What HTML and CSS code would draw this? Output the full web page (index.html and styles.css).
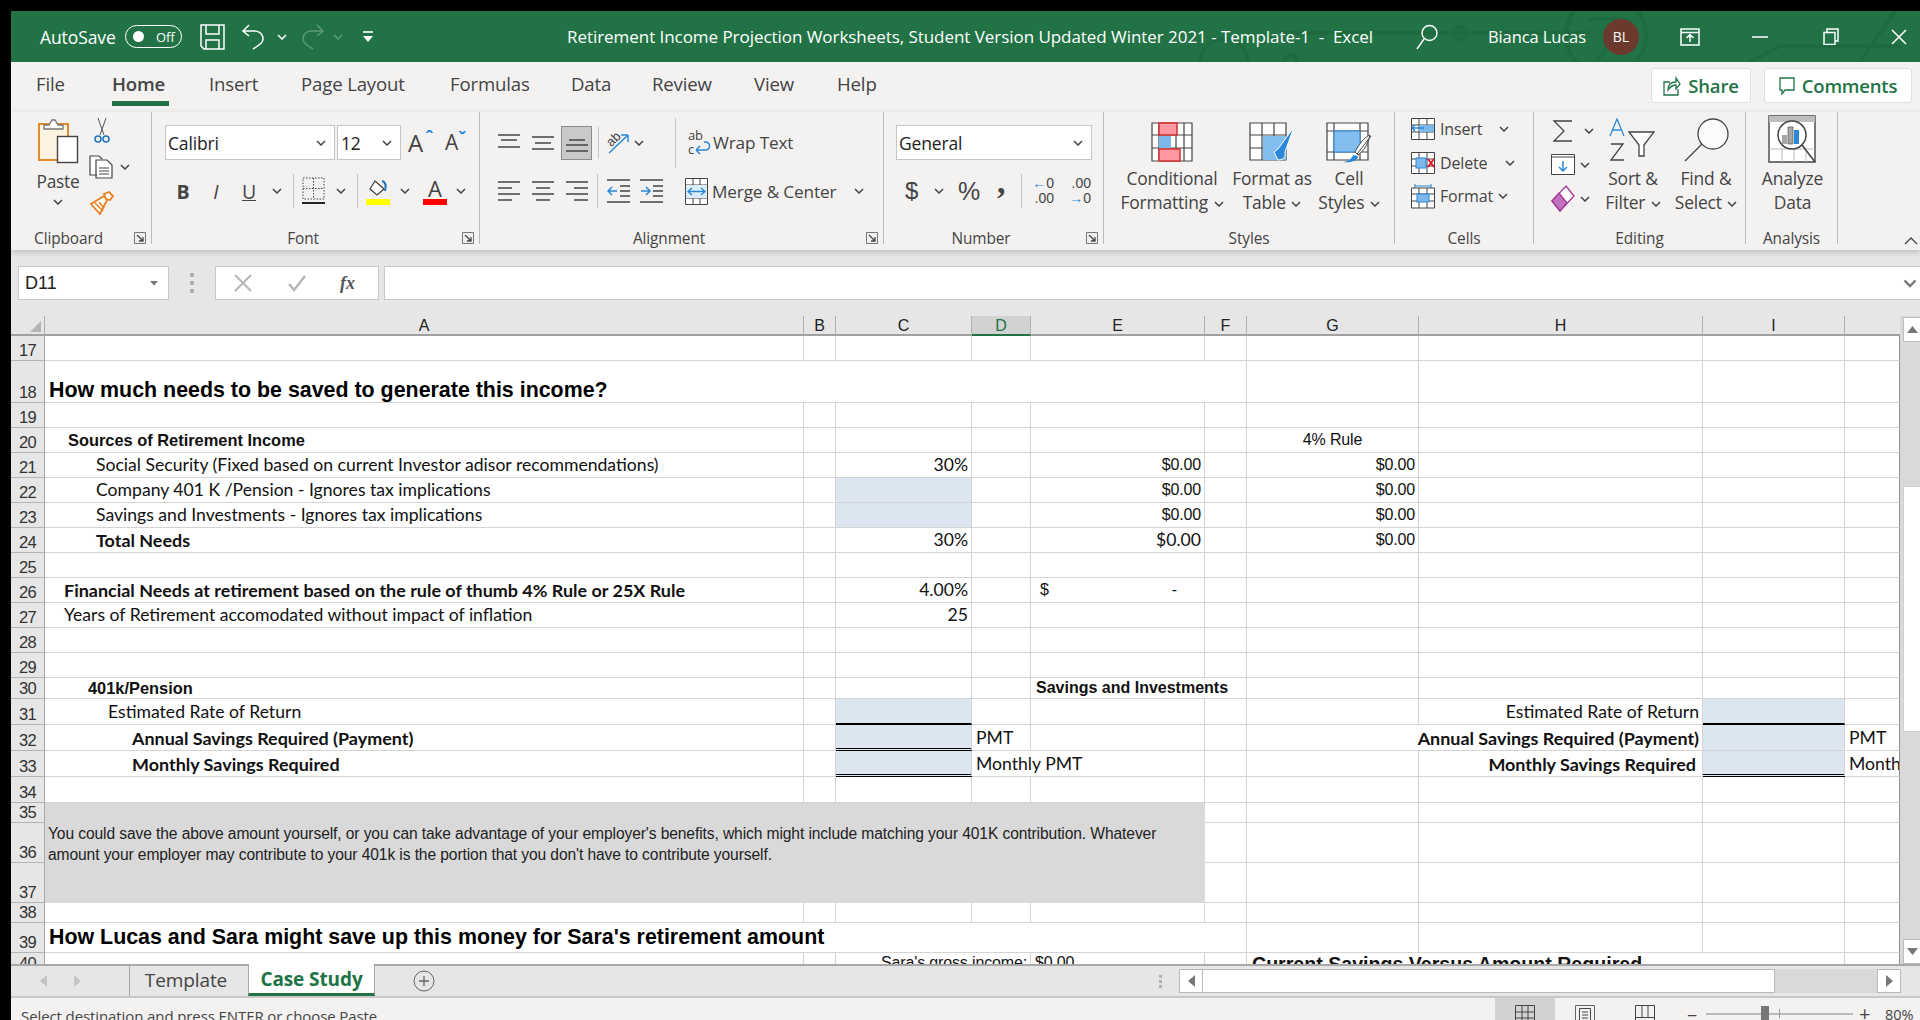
FILE: index.html
```html
<!DOCTYPE html>
<html lang="en">
<head>
<meta charset="utf-8">
<title>Retirement Income Projection Worksheets - Excel</title>
<link rel="stylesheet" href="styles.css">
</head>
<body>
<svg class="defs" width="0" height="0" aria-hidden="true">
  <symbol id="chev" viewBox="0 0 10 6"><path d="M1 1l4 4 4-4" fill="none" stroke="#444" stroke-width="1.5"/></symbol>
  <symbol id="launch" viewBox="0 0 12 12"><path d="M11.500 11.500H.5V.5h11z" fill="none" stroke="#777"/><path d="M3 3l6 6M9 5v4H5" fill="none" stroke="#444" stroke-width="1.3"/></symbol>
</svg>
<div class="app">
  <header class="titlebar">
    <svg class="circuit" width="760" height="51" viewBox="0 0 760 51" aria-hidden="true">
      <g fill="none" stroke="#1e6b40" stroke-width="4">
        <circle cx="64" cy="52" r="24"/>
        <path d="M52 54h32"/>
        <circle cx="131" cy="50" r="6"/>
        <path d="M120 22h310"/>
        <circle cx="300" cy="22" r="6"/>
        <circle cx="446" cy="24" r="40"/>
        <path d="M428 8h30l-4 18-18 25"/>
        <path d="M590 51l30-16h120M700 51l35-51"/>
      </g>
    </svg>
    <span class="autosave">AutoSave</span>
    <span class="toggle"><i class="knob"></i><b>Off</b></span>
    <svg class="qa-save" width="25" height="26" viewBox="0 0 25 26"><path d="M1 1h23v24H4l-3-3zM6 1v9h13V1M6 25v-9h13v9" fill="none" stroke="#fff" stroke-width="1.5"/></svg>
    <svg class="qa-undo" width="23" height="26" viewBox="0 0 23 26"><path d="M7 1L1 7l6 5M1 7h12a8 8 0 0 1 8 8c0 3-2 5-10 10" fill="none" stroke="#fff" stroke-width="1.5"/></svg>
    <svg class="qa-chev" width="10" height="6"><path d="M1 1l4 4 4-4" fill="none" stroke="#fff" stroke-width="1.5"/></svg>
    <svg class="qa-redo" width="23" height="26" viewBox="0 0 23 26"><path d="M16 1l6 6-6 5M22 7H10a8 8 0 0 0-8 8c0 3 2 5 10 10" fill="none" stroke="#5c9a78" stroke-width="1.5"/></svg>
    <svg class="qa-chev2" width="10" height="6"><path d="M1 1l4 4 4-4" fill="none" stroke="#5c9a78" stroke-width="1.5"/></svg>
    <svg class="qa-more" width="12" height="14" viewBox="0 0 12 14"><path d="M1 2h10" stroke="#fff" stroke-width="1.6"/><path d="M1 6h10l-5 6z" fill="#fff"/></svg>
    <span class="doc-title">Retirement Income Projection Worksheets, Student Version Updated Winter 2021 - Template-1 &nbsp;-&nbsp; Excel</span>
    <svg class="t-search" width="22" height="26" viewBox="0 0 22 26"><circle cx="13.5" cy="9" r="7.5" fill="none" stroke="#fff" stroke-width="1.4"/><path d="M8 15L1 25" stroke="#fff" stroke-width="1.4"/></svg>
    <span class="user">Bianca Lucas</span>
    <span class="avatar">BL</span>
    <svg class="t-display" width="20" height="18" viewBox="0 0 20 18"><path d="M1 1h18v16H1zM1 4.500h18M10 14V7M6.500 10L10 6.500l3.500 3.500" fill="none" stroke="#fff" stroke-width="1.5"/></svg>
    <svg class="t-min" width="16" height="2"><path d="M0 1h16" stroke="#fff" stroke-width="1.500"/></svg>
    <svg class="t-restore" width="16" height="17" viewBox="0 0 16 17"><path d="M1 4.500h11v12H1zM4 4.500V1h11v12h-3" fill="none" stroke="#fff" stroke-width="1.500"/></svg>
    <svg class="t-close" width="16" height="16" viewBox="0 0 16 16"><path d="M1 1l14 14M15 1L1 15" stroke="#fff" stroke-width="1.500"/></svg>
  </header>

  <nav class="tabs">
    <span class="tab t-file">File</span>
    <span class="tab tab-on t-home">Home</span>
    <span class="tab t-insert">Insert</span>
    <span class="tab t-layout">Page Layout</span>
    <span class="tab t-formulas">Formulas</span>
    <span class="tab t-data">Data</span>
    <span class="tab t-review">Review</span>
    <span class="tab t-view">View</span>
    <span class="tab t-help">Help</span>
    <button class="pill share"><svg width="18" height="20" viewBox="0 0 18 20"><path d="M7 6H1v13h14v-6M5 14c0-5 3-8 8-8V2l4 6-4 5V9c-4 0-6 2-8 5z" fill="none" stroke="#217346" stroke-width="1.300"/></svg>Share</button>
    <button class="pill comments"><svg width="16" height="18" viewBox="0 0 16 18"><path d="M1 1h14v12H6l-3 4v-4H1z" fill="none" stroke="#217346" stroke-width="1.300"/></svg>Comments</button>
  </nav>

  <section class="ribbon">
    <div class="group g-clip">
      <div class="clip-body">
        <div class="paste">
          <svg width="42" height="46" viewBox="0 0 42 46"><rect x="2" y="6" width="29" height="36" fill="#fdf3e3" stroke="#e58a2b" stroke-width="2"/><path d="M7 11V7h5l3-5h3l3 5h5v4z" fill="#fff" stroke="#777" stroke-width="1.300"/><rect x="20.500" y="18.500" width="20" height="26" fill="#fff" stroke="#444" stroke-width="1.400"/></svg>
          <span>Paste</span>
          <svg class="chev" width="10" height="6"><use href="#chev"/></svg>
        </div>
        <div class="clip-tools">
          <svg width="16" height="25" viewBox="0 0 16 25"><path d="M4 0l6 17M12 0L6 17" stroke="#555" fill="none"/><circle cx="4" cy="21" r="3" fill="none" stroke="#1b75bb" stroke-width="1.500"/><circle cx="12" cy="21" r="3" fill="none" stroke="#1b75bb" stroke-width="1.500"/></svg>
          <span class="copy"><svg width="25" height="24" viewBox="0 0 25 24"><path d="M8 20H1V1h9l3 3M7 5h11l5 5v13H7z" fill="#fff" stroke="#444" stroke-width="1.200"/><path d="M10 13h10M10 16h10M10 19h10" stroke="#444"/></svg><svg class="chev" width="10" height="6"><use href="#chev"/></svg></span>
          <svg width="25" height="24" viewBox="0 0 25 24"><path d="M15 3l5-2 4 4-3 4-4-1zM15 5L2 13l9 10 7-14z" fill="#fff" stroke="#e5801c" stroke-width="1.800"/><path d="M6 12l8 8M10 11l5 6" stroke="#e5801c" stroke-width="1.500"/></svg>
        </div>
      </div>
      <div class="glabel"><span>Clipboard</span><svg class="launch" width="12" height="12"><use href="#launch"/></svg></div>
    </div>

    <div class="group g-font">
      <div class="grow r1">
        <span class="select s-font">Calibri<svg width="10" height="6"><use href="#chev"/></svg></span>
        <span class="select s-size">12<svg width="10" height="6"><use href="#chev"/></svg></span>
        <span class="grow-a">A<sup>ˆ</sup></span>
        <span class="shrink-a">A<sup>ˇ</sup></span>
      </div>
      <div class="grow r2 font-tools">
        <b class="ft-b">B</b>
        <i class="ft-i">I</i>
        <u class="ft-u">U</u>
        <svg class="chev c1" width="10" height="6"><use href="#chev"/></svg>
        <span class="vsep s1"></span>
        <svg class="ft-border" width="23" height="28" viewBox="0 0 23 28"><path d="M1 1h21v21H1zM11.500 1v21M1 11.500h21" fill="none" stroke="#444" stroke-dasharray="1.500 1.500"/><path d="M0 26h23" stroke="#222" stroke-width="2"/></svg>
        <svg class="chev c2" width="10" height="6"><use href="#chev"/></svg>
        <span class="vsep s2"></span>
        <svg class="ft-fill" width="24" height="28" viewBox="0 0 24 28"><path d="M9 4l-5 8 7 6 7-6z" fill="#fff" stroke="#444" stroke-width="1.300"/><path d="M16 4c4 1 4 6 3 10" fill="none" stroke="#1b75bb" stroke-width="2"/><rect y="22" width="24" height="6" fill="#ffff00"/></svg>
        <svg class="chev c3" width="10" height="6"><use href="#chev"/></svg>
        <span class="ft-color">A</span>
        <svg class="chev c4" width="10" height="6"><use href="#chev"/></svg>
      </div>
      <div class="glabel"><span>Font</span><svg class="launch" width="12" height="12"><use href="#launch"/></svg></div>
    </div>

    <div class="group g-align">
      <div class="grow r1 al-r1">
        <svg class="al a1" width="22" height="18" viewBox="0 0 22 18"><path d="M0 1h22M3 6h16M0 13h22" stroke="#444" stroke-width="1.300"/></svg>
        <svg class="al a2" width="22" height="18" viewBox="0 0 22 18"><path d="M0 3h22M3 9h16M0 15h22" stroke="#444" stroke-width="1.300"/></svg>
        <span class="al-on"><svg width="22" height="18" viewBox="0 0 22 18"><path d="M3 6h16M0 11h22M0 17h22" stroke="#444" stroke-width="1.300"/></svg></span>
        <span class="vsep s3"></span>
        <svg class="al-orient" width="24" height="24" viewBox="0 0 24 24"><path d="M3 22L22 4M22 4h-7M22 4v7" fill="none" stroke="#2b88d8" stroke-width="1.500"/><text x="1" y="14" class="ab-rot" transform="rotate(-45 6 10)">ab</text></svg>
        <svg class="chev c5" width="10" height="6"><use href="#chev"/></svg>
        <span class="vsep s4"></span>
        <span class="ic-txt wrap"><svg width="24" height="26" viewBox="0 0 24 26"><text x="0" y="10" class="wraptxt">ab</text><text x="0" y="24" class="wraptxt">c</text><path d="M8 20h9c6 0 6-8 0-8h-1M8 20l4-4M8 20l4 4" fill="none" stroke="#2b88d8" stroke-width="1.500"/></svg>Wrap Text</span>
      </div>
      <div class="grow r2 al-r2">
        <svg class="al a1" width="22" height="22" viewBox="0 0 22 22"><path d="M0 2h22M0 8h14M0 14h22M0 20h14" stroke="#444" stroke-width="1.300"/></svg>
        <svg class="al a2" width="22" height="22" viewBox="0 0 22 22"><path d="M0 2h22M4 8h14M0 14h22M4 20h14" stroke="#444" stroke-width="1.300"/></svg>
        <svg class="al a3" width="22" height="22" viewBox="0 0 22 22"><path d="M0 2h22M8 8h14M0 14h22M8 20h14" stroke="#444" stroke-width="1.300"/></svg>
        <span class="vsep s5"></span>
        <svg class="al-ind" width="23" height="24" viewBox="0 0 23 24"><path d="M0 1h23M13 7h10M13 12h10M13 17h10M0 23h23" stroke="#444" stroke-width="1.300"/><path d="M10 12H1M5 8l-4 4 4 4" fill="none" stroke="#2b88d8" stroke-width="1.500"/></svg>
        <svg class="al-out" width="23" height="24" viewBox="0 0 23 24"><path d="M0 1h23M13 7h10M13 12h10M13 17h10M0 23h23" stroke="#444" stroke-width="1.300"/><path d="M1 12h9M6 8l4 4-4 4" fill="none" stroke="#2b88d8" stroke-width="1.500"/></svg>
        <span class="ic-txt merge"><svg width="23" height="27" viewBox="0 0 23 27"><path d="M.5.500h22v26H.5zM.5 7h22M.5 20h22M8 .500V7M15 .500V7M8 20v7M15 20v7" fill="#fff" stroke="#444"/><rect x="1" y="7" width="21" height="13" fill="#dcecf9"/><path d="M3 13.500h17M7 10l-4 3.500L7 17M16 10l4 3.500-4 3.500" fill="none" stroke="#2b88d8" stroke-width="1.400"/></svg>Merge &amp; Center<svg class="chev c6" width="10" height="6"><use href="#chev"/></svg></span>
      </div>
      <div class="glabel"><span>Alignment</span><svg class="launch" width="12" height="12"><use href="#launch"/></svg></div>
    </div>

    <div class="group g-num">
      <div class="grow r1"><span class="select s-num">General<svg width="10" height="6"><use href="#chev"/></svg></span></div>
      <div class="grow r2 num-tools">
        <span class="n-dollar">$</span>
        <svg class="chev c7" width="10" height="6"><use href="#chev"/></svg>
        <span class="n-pct">%</span>
        <span class="n-comma">,</span>
        <span class="vsep s6"></span>
        <span class="decs d1"><em>←</em>0<br>.00</span>
        <span class="decs d2">.00<br><em>→</em>0</span>
      </div>
      <div class="glabel"><span>Number</span><svg class="launch" width="12" height="12"><use href="#launch"/></svg></div>
    </div>

    <div class="group g-styles">
      <div class="big-row styles-row">
        <div class="big b-cond">
          <svg width="42" height="40" viewBox="0 0 42 40"><path d="M1 1h40v38H1zM8 1v38M33 1v38M25 1v38M1 13h40M1 26h40" fill="#fff" stroke="#444" stroke-width="1.200"/><rect x="8" y="1" width="18" height="12" fill="#ff98a1" stroke="#d62f2f" stroke-width="1.500"/><rect x="8" y="14" width="12" height="12" fill="#7db7ec"/><rect x="8" y="27" width="21" height="12" fill="#ff98a1" stroke="#d62f2f" stroke-width="1.500"/></svg>
          <span>Conditional<br>Formatting <svg width="10" height="6"><use href="#chev"/></svg></span>
        </div>
        <div class="big b-table">
          <svg width="46" height="42" viewBox="0 0 46 42"><path d="M1 1h36v37H1zM13 1v37M25 1v37M1 13h36M1 26h36" fill="#fff" stroke="#444" stroke-width="1.200"/><rect x="14" y="14" width="23" height="24" fill="#83bdf0"/><path d="M45 5L29 27l-4 3 4 8c6 0 8-4 7-8z" fill="#2b88d8" stroke="#fff"/></svg>
          <span>Format as<br>Table <svg width="10" height="6"><use href="#chev"/></svg></span>
        </div>
        <div class="big b-cell">
          <svg width="46" height="42" viewBox="0 0 46 42"><path d="M1 1h41v37H1zM8 1v37M34 1v37M1 9h41M1 30h41" fill="#fff" stroke="#444" stroke-width="1.200"/><rect x="8" y="9" width="26" height="21" fill="#83bdf0" stroke="#2b88d8"/><path d="M45 14L31 32M44 13c-6 2-12 11-15 17l3 3c6-4 10-11 12-20z" fill="#fff" stroke="#444"/><path d="M27 33c-1 4-6 7-10 7 8 1 15-1 15-6z" fill="#2b88d8"/></svg>
          <span>Cell<br>Styles <svg width="10" height="6"><use href="#chev"/></svg></span>
        </div>
      </div>
      <div class="glabel"><span>Styles</span></div>
    </div>

    <div class="group g-cells">
      <div class="cell-tools">
        <span class="ic-txt"><svg width="24" height="22" viewBox="0 0 24 22"><path d="M.5.500h23v21H.5zM8 .500v21M16 .500v21M.5 7h23M.5 14h23" fill="#fff" stroke="#444"/><rect x="8" y="7" width="15" height="7" fill="#7db7ec"/><path d="M1 10h12M4 7l-3 3 3 3" fill="none" stroke="#2b88d8" stroke-width="1.500"/></svg>Insert<svg class="chev c8" width="10" height="6"><use href="#chev"/></svg></span>
        <span class="ic-txt"><svg width="24" height="22" viewBox="0 0 24 22"><path d="M.5.500h23v21H.5zM8 .500v21M16 .500v21M.5 7h23M.5 14h23" fill="#fff" stroke="#444"/><rect x="5" y="6" width="10" height="10" fill="#7db7ec" stroke="#2b88d8"/><path d="M17 7l6 8M23 7l-6 8" stroke="#e81123" stroke-width="1.800"/></svg>Delete<svg class="chev c9" width="10" height="6"><use href="#chev"/></svg></span>
        <span class="ic-txt"><svg width="24" height="26" viewBox="0 0 24 26"><path d="M4 1v5M20 1v5M4 3h16" stroke="#2b88d8" fill="none"/><path d="M.5 5h23v20H.5zM8 5v20M16 5v20M.5 11h23M.5 18h23" fill="#fff" stroke="#444"/><rect x="6" y="11" width="12" height="8" fill="#7db7ec" stroke="#2b88d8"/></svg>Format<svg class="chev c10" width="10" height="6"><use href="#chev"/></svg></span>
      </div>
      <div class="glabel"><span>Cells</span></div>
    </div>

    <div class="group g-edit">
      <div class="big-row edit-row">
        <div class="edit-tools">
          <span class="et et-sum"><svg class="sigma" width="24" height="22" viewBox="0 0 24 22"><path d="M21 1H3l10 10L3 21h18" fill="none" stroke="#444" stroke-width="1.300"/></svg><svg class="chev" width="10" height="6"><use href="#chev"/></svg></span>
          <span class="et"><svg width="24" height="21" viewBox="0 0 24 21"><path d="M.5.500h23v20H.5z" fill="#fff" stroke="#444"/><path d="M.5 3h23" stroke="#444"/><path d="M12 7v10M8 13l4 4 4-4" fill="none" stroke="#2b88d8" stroke-width="1.500"/></svg><svg class="chev" width="10" height="6"><use href="#chev"/></svg></span>
          <span class="et"><svg width="24" height="28" viewBox="0 0 24 28"><path d="M15 1l8 10-14 15-8-10z" fill="#fff" stroke="#a4379c" stroke-width="1.300"/><path d="M1 16l8 10 7-8-8-10z" fill="#c272bd" stroke="#a4379c" stroke-width="1.300"/></svg><svg class="chev" width="10" height="6"><use href="#chev"/></svg></span>
        </div>
        <div class="big b-sort">
          <svg width="48" height="44" viewBox="0 0 48 44"><path d="M1 18L8 1l7 17M3.500 12h9" fill="none" stroke="#2b88d8" stroke-width="1.300"/><path d="M2 26h12L2 42h13" fill="none" stroke="#444" stroke-width="1.300"/><path d="M20 14h25L35 27v11h-5V27z" fill="#fff" stroke="#444" stroke-width="1.300"/></svg>
          <span>Sort &amp;<br>Filter <svg width="10" height="6"><use href="#chev"/></svg></span>
        </div>
        <div class="big b-find">
          <svg width="46" height="44" viewBox="0 0 46 44"><circle cx="30" cy="16" r="15" fill="#fbfbfb" stroke="#444" stroke-width="1.300"/><path d="M19 26L2 43" stroke="#444" stroke-width="1.300"/></svg>
          <span>Find &amp;<br>Select <svg width="10" height="6"><use href="#chev"/></svg></span>
        </div>
      </div>
      <div class="glabel"><span>Editing</span></div>
    </div>

    <div class="group g-analysis">
      <div class="big-row">
        <div class="big b-analyze">
          <svg width="48" height="48" viewBox="0 0 48 48"><path d="M1 1h46v46H1z" fill="#fff" stroke="#444" stroke-width="1.400"/><path d="M1 1h46v6H1z" fill="#bdbdbd"/><path d="M1 34h46M14 34v13M26 34v13M38 34v13" stroke="#bbb"/><circle cx="24" cy="20" r="14" fill="#fff" stroke="#444" stroke-width="1.500"/><rect x="14" y="20" width="5" height="9" fill="#a6a6a6"/><rect x="20" y="12" width="5" height="17" fill="#a6a6a6" stroke="#444" stroke-width=".6"/><rect x="26" y="15" width="5" height="14" fill="#2b88d8"/><path d="M34 30l13 17" stroke="#444" stroke-width="1.600"/></svg>
          <span>Analyze<br>Data</span>
        </div>
      </div>
      <div class="glabel"><span>Analysis</span></div>
    </div>
    <svg class="collapse" width="14" height="9" viewBox="0 0 14 9"><path d="M1 8l6-6 6 6" fill="none" stroke="#444" stroke-width="1.300"/></svg>
  </section>

  <section class="formula">
    <div class="namebox"><span>D11</span><svg width="8" height="5"><path d="M0 0h8L4 4.500z" fill="#777"/></svg></div>
    <span class="dots"><i></i><i></i><i></i></span>
    <div class="fxbox">
      <svg width="18" height="18" viewBox="0 0 18 18"><path d="M1 1l16 16M17 1L1 17" stroke="#b5b5b5" stroke-width="2"/></svg>
      <svg width="18" height="18" viewBox="0 0 18 18"><path d="M1 10l5 6L17 2" fill="none" stroke="#b5b5b5" stroke-width="2.400"/></svg>
      <span>fx</span>
    </div>
    <div class="fxinput"><svg width="14" height="9" viewBox="0 0 14 9"><path d="M1.500 1.500L7 7l5.500-5.500" fill="none" stroke="#777" stroke-width="2.400"/></svg></div>
  </section>

  <section class="sheet">
    <div class="gridwrap">
      <table class="grid">
        <colgroup><col class="c-rh"><col class="c-a"><col class="c-b"><col class="c-c"><col class="c-d"><col class="c-e"><col class="c-f"><col class="c-g"><col class="c-h"><col class="c-i"><col class="c-j"></colgroup>
        <thead>
          <tr class="rhead"><th class="corner"><i></i></th><th>A</th><th>B</th><th>C</th><th class="col-on">D</th><th>E</th><th>F</th><th>G</th><th>H</th><th>I</th><th></th></tr>
        </thead>
        <tbody>
          <tr class="h25"><th>17</th><td></td><td></td><td></td><td></td><td></td><td></td><td></td><td></td><td></td><td></td></tr>
          <tr class="h42"><th>18</th><td colspan="6" class="head head-a">How much needs to be saved to generate this income?</td><td></td><td></td><td></td><td></td></tr>
          <tr class="h25"><th>19</th><td></td><td></td><td></td><td></td><td></td><td></td><td></td><td></td><td></td><td></td></tr>
          <tr class="h25"><th>20</th><td class="ari-cal bold ind1">Sources of Retirement Income</td><td></td><td></td><td></td><td></td><td></td><td class="ari mid">4% Rule</td><td></td><td></td><td></td></tr>
          <tr class="h25"><th>21</th><td class="cal ind2">Social Security (Fixed based on current Investor adisor recommendations)</td><td></td><td class="cal num">30%</td><td></td><td class="ari num">$0.00</td><td></td><td class="ari num">$0.00</td><td></td><td></td><td></td></tr>
          <tr class="h25"><th>22</th><td class="cal ind2">Company 401 K /Pension - Ignores tax implications</td><td></td><td class="fill"></td><td></td><td class="ari num">$0.00</td><td></td><td class="ari num">$0.00</td><td></td><td></td><td></td></tr>
          <tr class="h25"><th>23</th><td class="cal ind2">Savings and Investments - Ignores tax implications</td><td></td><td class="fill"></td><td></td><td class="ari num">$0.00</td><td></td><td class="ari num">$0.00</td><td></td><td></td><td></td></tr>
          <tr class="h25"><th>24</th><td class="cal bold ind2">Total Needs</td><td></td><td class="cal num">30%</td><td></td><td class="cal num">$0.00</td><td></td><td class="ari num">$0.00</td><td></td><td></td><td></td></tr>
          <tr class="h25"><th>25</th><td></td><td></td><td></td><td></td><td></td><td></td><td></td><td></td><td></td><td></td></tr>
          <tr class="h25"><th>26</th><td class="cal bold ind0">Financial Needs at retirement based on the rule of thumb 4% Rule or 25X Rule</td><td></td><td class="cal num">4.00%</td><td></td><td class="ari"><div class="acct"><span>$</span><span>-</span></div></td><td></td><td></td><td></td><td></td><td></td></tr>
          <tr class="h25"><th>27</th><td class="cal ind0">Years of Retirement accomodated without impact of inflation</td><td></td><td class="cal num">25</td><td></td><td></td><td></td><td></td><td></td><td></td><td></td></tr>
          <tr class="h25"><th>28</th><td></td><td></td><td></td><td></td><td></td><td></td><td></td><td></td><td></td><td></td></tr>
          <tr class="h25"><th>29</th><td></td><td></td><td></td><td></td><td></td><td></td><td></td><td></td><td></td><td></td></tr>
          <tr class="h21"><th>30</th><td class="ari-cal bold ind3">401k/Pension</td><td></td><td></td><td></td><td colspan="2" class="ari bold small-left">Savings and Investments</td><td></td><td></td><td></td><td></td></tr>
          <tr class="h26"><th>31</th><td class="cal ind4">Estimated Rate of Return</td><td></td><td class="fill b-thick"></td><td></td><td></td><td></td><td></td><td class="cal num">Estimated Rate of Return</td><td class="fill b-thick"></td><td></td></tr>
          <tr class="h26"><th>32</th><td class="cal bold ind5">Annual Savings Required (Payment)</td><td></td><td class="fill b-dbl"></td><td class="cal pad">PMT</td><td></td><td></td><td colspan="2" class="cal bold num">Annual Savings Required (Payment)</td><td class="fill"></td><td class="cal pad">PMT</td></tr>
          <tr class="h26"><th>33</th><td class="cal bold ind5">Monthly Savings Required</td><td></td><td class="fill b-dbl"></td><td colspan="2" class="cal pad">Monthly PMT</td><td></td><td></td><td class="cal bold num num-8">Monthly Savings Required</td><td class="fill b-dbl"></td><td class="cal pad clip">Monthly PMT</td></tr>
          <tr class="h26"><th>34</th><td></td><td></td><td></td><td></td><td></td><td></td><td></td><td></td><td></td><td></td></tr>
          <tr class="h20"><th>35</th><td colspan="5" rowspan="3" class="note">You could save the above amount yourself, or you can take advantage of your employer's benefits, which might include matching your 401K contribution. Whatever<br>amount your employer may contribute to your 401k is the portion that you don't have to contribute yourself.</td><td></td><td></td><td></td><td></td><td></td></tr>
          <tr class="h40"><th>36</th><td></td><td></td><td></td><td></td><td></td></tr>
          <tr class="h40"><th>37</th><td></td><td></td><td></td><td></td><td></td></tr>
          <tr class="h20"><th>38</th><td></td><td></td><td></td><td></td><td></td><td></td><td></td><td></td><td></td><td></td></tr>
          <tr class="h30"><th>39</th><td colspan="6" class="head head-b">How Lucas and Sara might save up this money for Sara's retirement amount</td><td></td><td></td><td></td><td></td></tr>
          <tr class="h26 cutoff"><th>40</th><td></td><td></td><td colspan="2" class="ari num top">Sara's gross income:</td><td class="ari pad top">$0.00</td><td></td><td colspan="3" class="ari bold sub top">Current Savings Versus Amount Required</td><td></td></tr>
        </tbody>
      </table>
    </div>
    <div class="vscroll">
      <span class="sb-btn"><svg width="11" height="7"><path d="M0 7L5.500 0 11 7z" fill="#777"/></svg></span>
      <span class="sb-gap1"></span>
      <span class="sb-thumb"></span>
      <span class="sb-gap2"></span>
      <span class="sb-btn"><svg width="11" height="7"><path d="M0 0l5.500 7L11 0z" fill="#777"/></svg></span>
    </div>
  </section>

  <section class="sheettabs">
    <svg class="nav n1" width="7" height="12"><path d="M7 0v12L0 6z" fill="#c4c4c4"/></svg>
    <svg class="nav n2" width="7" height="12"><path d="M0 0v12l7-6z" fill="#c4c4c4"/></svg>
    <span class="st-sep"></span>
    <span class="st st-template">Template</span>
    <span class="st st-on">Case Study</span>
    <svg class="st-add" width="22" height="22" viewBox="0 0 22 22"><circle cx="11" cy="11" r="10" fill="none" stroke="#666"/><path d="M11 6v10M6 11h10" stroke="#666" stroke-width="1.300"/></svg>
    <span class="dots st-dots"><i></i><i></i><i></i></span>
    <span class="hs-btn hs-left"><svg width="7" height="12"><path d="M7 0v12L0 6z" fill="#777"/></svg></span>
    <span class="hs-thumb"></span>
    <span class="hs-track"></span>
    <span class="hs-btn hs-right"><svg width="7" height="12"><path d="M0 0v12l7-6z" fill="#777"/></svg></span>
  </section>

  <footer class="status">
    <span class="st-msg">Select destination and press ENTER or choose Paste</span>
    <span class="view view-on"><svg width="20" height="20" viewBox="0 0 20 20"><path d="M.5.500h19v19H.5zM7 .500v19M13 .500v19M.5 7h19M.5 13h19" fill="none" stroke="#444"/></svg></span>
    <span class="view"><svg width="20" height="20" viewBox="0 0 20 20"><path d="M.5.500h19v19H.5z" fill="none" stroke="#666"/><path d="M4.500 3.500h11v16h-11zM7 7h6M7 10h6M7 13h6M7 16h6" fill="none" stroke="#444"/></svg></span>
    <span class="view"><svg width="20" height="20" viewBox="0 0 20 20"><path d="M.5.500h19v19H.5zM7 .500v12M13 .500v12M.5 12.500h19" fill="none" stroke="#444"/></svg></span>
    <span class="z-minus">−</span>
    <span class="slider"><i class="tick"></i><i class="thumb"></i></span>
    <span class="z-plus">+</span>
    <span class="z-pct">80%</span>
  </footer>
</div>
</body>
</html>
```
FILE: styles.css
```css
* { box-sizing: border-box; }
html, body { margin: 0; height: 100%; overflow: hidden; background: #000; }
body { padding: 11px 0 0 11px; font-family: "Open Sans", "Noto Sans", sans-serif; color: #444; }
.defs { position: absolute; }
svg { display: block; flex: none; }
button { font: inherit; }

.app { width: 1909px; height: 1009px; display: flex; flex-direction: column; background: #f3f2f1; overflow: hidden; }

/* Title bar */
.titlebar { position: relative; flex: none; height: 51px; background: #217346; display: flex; align-items: center; color: #fff; padding-left: 29px; font-size: 16px; }
.circuit { position: absolute; right: 0; top: 0; }
.titlebar > *:not(.circuit) { position: relative; }
.autosave { width: 85px; letter-spacing: -.1px; font-size: 17.5px; }
.toggle { width: 57px; height: 23px; border: 1px solid #fff; border-radius: 12px; display: flex; align-items: center; padding-left: 7px; gap: 12px; font-size: 13px; }
.toggle b { font-weight: 400; }
.knob { width: 11px; height: 11px; border-radius: 50%; background: #fff; }
.qa-save { margin-left: 18px; }
.qa-undo { margin-left: 17px; }
.qa-chev { margin-left: 12px; }
.qa-redo { margin-left: 14px; }
.qa-chev2 { margin-left: 9px; }
.qa-more { margin-left: 19px; }
.doc-title { margin-left: 193px; width: 773px; white-space: nowrap; font-size: 17px; letter-spacing: -.05px; }
.t-search { margin-left: 76px; }
.user { margin-left: 50px; width: 102px; white-space: nowrap; font-size: 16.5px; letter-spacing: -.1px; }
.avatar { margin-left: 13px; width: 36px; height: 36px; border-radius: 50%; background: #6b3a2c; display: flex; align-items: center; justify-content: center; font-size: 14px; }
.t-display { margin-left: 41px; }
.t-min { margin-left: 52px; }
.t-restore { margin-left: 55px; }
.t-close { margin-left: 52px; }

/* Tabs */
.tabs { flex: none; height: 50px; display: flex; align-items: center; padding-left: 25px; font-size: 18.6px; position: relative; }
.tab { display: block; white-space: nowrap; line-height: 36px; height: 37px; margin-top: -6px; letter-spacing: -.15px; }
.t-file { width: 76px; }
.t-home { width: 97px; }
.t-insert { width: 92px; }
.t-layout { width: 149px; }
.t-formulas { width: 121px; }
.t-data { width: 81px; }
.t-review { width: 102px; }
.t-view { width: 83px; }
.t-help { width: 814px; }
.tab-on { font-weight: 600; }
.t-home::after { content: ""; display: block; width: 57px; height: 5px; background: #217346; margin-top: -1px; }
.pill { height: 35px; background: #fff; border: 1px solid #e1dfdd; border-radius: 3px; display: flex; align-items: center; justify-content: center; gap: 7px; color: #217346; font-weight: 600; font-size: 18.5px; letter-spacing: -.2px; margin-top: -3px; padding: 0; }
.share { width: 100px; }
.comments { width: 148px; margin-left: 13px; }

/* Ribbon */
.ribbon { flex: none; height: 138px; display: flex; position: relative; font-size: 17.4px; box-shadow: 0 2px 6px rgba(0,0,0,.18); z-index: 1; }
.group { height: 132px; border-right: 1px solid #bdbbb9; display: flex; flex-direction: column; flex: none; }
.g-clip { width: 141px; }
.g-font { width: 328px; }
.g-align { width: 404px; }
.g-num { width: 220px; }
.g-styles { width: 291px; }
.g-cells { width: 139px; }
.g-edit { width: 212px; }
.g-analysis { width: 92px; }
.glabel { margin-top: auto; height: 20px; margin-bottom: -4px; display: flex; align-items: center; font-size: 15.4px; letter-spacing: -.1px; }
.glabel span { flex: 1; text-align: center; }
.launch { margin: 0 5px 0 8px; }

.clip-body { display: flex; padding: 6px 0 0 26px; }
.paste { width: 42px; display: flex; flex-direction: column; align-items: center; }
.paste span { margin-top: 5px; line-height: 24px; letter-spacing: -.3px; }
.paste .chev { margin-top: 6px; }
.clip-tools { margin-left: 10px; display: flex; flex-direction: column; gap: 12px; }
.clip-tools > svg:first-child { margin-left: 5px; }
.clip-tools .copy { display: flex; align-items: center; gap: 6px; width: 45px; }

.grow { display: flex; align-items: center; }
.r1 { height: 35px; margin-top: 13px; }
.r2 { height: 34px; margin-top: 14px; }
.g-font .grow { padding-left: 13px; }
.select { height: 35px; background: #fff; border: 1px solid #c8c6c4; display: flex; align-items: center; justify-content: space-between; padding: 0 8px 0 2px; color: #222; font-size: 17.5px; letter-spacing: -.15px; }
.s-font { width: 170px; }
.s-size { width: 64px; margin-left: 2px; padding-left: 3px; }
.s-num { width: 196px; margin-left: 12px; }
.grow-a, .shrink-a { font-size: 24px; line-height: 1; position: relative; color: #444; }
.grow-a { margin-left: 7px; width: 37px; }
.shrink-a { width: 26px; font-size: 21px; }
.grow-a sup, .shrink-a sup { position: absolute; left: 17px; top: -2px; font-size: 17px; line-height: 1; color: #2b88d8; font-weight: 700; }
.shrink-a sup { left: 13px; }
.font-tools b, .font-tools i, .font-tools u { font-size: 19.5px; text-align: center; color: #444; font-family: "Open Sans", sans-serif; font-weight: 400; }
.font-tools b { font-weight: 700; }
.ft-b { margin-left: 9px; width: 18px; }
.ft-i { margin-left: 16px; width: 16px; }
.ft-u { margin-left: 17px; width: 16px; }
.c1 { margin-left: 15px; }
.vsep { width: 1px; height: 34px; background: #c8c6c4; flex: none; }
.s1 { margin-left: 11px; }
.ft-border { margin-left: 8px; }
.c2 { margin-left: 11px; }
.s2 { margin-left: 11px; }
.ft-fill { margin-left: 8px; }
.c3 { margin-left: 10px; }
.ft-color { margin-left: 13px; width: 24px; height: 28px; text-align: center; font-size: 22px; line-height: 22px; color: #444; border-bottom: 6px solid #f00; }
.c4 { margin-left: 9px; }

.g-align .grow { padding-left: 18px; }
.al-r1 .a2 { margin-left: 12px; }
.al-on { margin-left: 7px; width: 31px; height: 34px; background: #c9c9c9; border: 1px solid #8c8c8c; display: flex; align-items: center; justify-content: center; }
.s3 { margin-left: 6px; height: 32px; }
.al-orient { margin-left: 7px; }
.ab-rot { font: 13px "Liberation Sans", sans-serif; fill: #444; }
.c5 { margin-left: 4px; }
.s4 { margin-left: 31px; height: 50px; }
.ic-txt { display: flex; align-items: center; gap: 4px; white-space: nowrap; letter-spacing: -.15px; font-size: 17.2px; }
.wrap { margin-left: 12px; gap: 1px; }
.wraptxt { font: 13px "Open Sans", sans-serif; fill: #444; }
.al-r2 .a2, .al-r2 .a3 { margin-left: 12px; }
.s5 { margin-left: 9px; }
.al-ind { margin-left: 9px; }
.al-out { margin-left: 10px; }
.merge { margin-left: 22px; }
.c6 { margin-left: 14px; }

.num-tools { font-family: "Liberation Sans", sans-serif; padding-left: 21px; }
.n-dollar { font-size: 24px; width: 13px; text-align: center; font-weight: 300; }
.c7 { margin-left: 16px; }
.n-pct { margin-left: 14px; font-size: 25px; width: 28px; }
.n-comma { margin-left: 11px; font: 700 34px/10px "Liberation Serif", serif; width: 16px; height: 28px; }
.s6 { margin-left: 8px; }
.decs { font-size: 14px; line-height: 15px; color: #444; text-align: right; width: 24px; white-space: nowrap; }
.decs em { color: #2b88d8; font-style: normal; font-weight: 700; font-size: 14px; }
.d1 { margin-left: 8px; }
.d2 { margin-left: 13px; }

.big-row { display: flex; }
.big { display: flex; flex-direction: column; align-items: center; text-align: center; line-height: 24px; letter-spacing: -.15px; white-space: nowrap; }
.big span svg { display: inline-block; vertical-align: 2px; margin-left: 1px; }
.styles-row { padding: 10px 0 0 0; }
.b-cond { margin-left: 14px; width: 108px; }
.b-cond > span { margin-top: 4px; }
.b-table { margin-left: -2px; width: 96px; }
.b-cell { margin-left: -3px; width: 64px; }
.b-table > span, .b-cell > span { margin-top: 2px; }

.cell-tools { display: flex; flex-direction: column; padding: 5px 0 0 16px; gap: 9.5px; }
.cell-tools .ic-txt { height: 24px; gap: 5px; font-size: 16px; }
.c8 { margin-left: 12px; }
.c9 { margin-left: 13px; }
.c10 { margin-left: 0; }

.edit-row { padding: 6px 0 0 17px; }
.edit-tools { width: 48px; display: flex; flex-direction: column; gap: 9px; }
.et { display: flex; align-items: center; gap: 5px; height: 25px; }
.et-sum .chev { margin-left: 4px; }
.b-sort { width: 68px; }
.b-find { width: 66px; margin-left: 6px; }
.b-sort > span, .b-find > span { margin-top: 4px; }
.g-analysis .big-row { justify-content: center; padding: 3px 0 0 2px; }
.b-analyze > span { margin-top: 3px; }
.collapse { position: absolute; left: 1893px; top: 124px; }

/* Formula bar */
.formula { flex: none; height: 66px; background: #e6e6e6; display: flex; padding: 16px 0 0 7px; align-items: flex-start; }
.namebox { width: 151px; height: 34px; background: #fff; border: 1px solid #c8c8c8; display: flex; align-items: center; justify-content: space-between; padding: 0 10px 0 6px; font: 18px "Liberation Sans", sans-serif; color: #222; }
.dots { width: 46px; display: flex; flex-direction: column; align-items: center; gap: 4px; padding-top: 7px; }
.dots i { width: 4px; height: 4px; background: #b0b0b0; display: block; }
.fxbox { width: 164px; height: 34px; background: #fff; border: 1px solid #c8c8c8; display: flex; align-items: center; padding-left: 18px; gap: 36px; }
.fxbox span { font: italic 700 18px "Liberation Serif", serif; color: #555; margin-left: -2px; }
.fxinput { flex: 1; height: 34px; margin-left: 5px; background: #fff; border: 1px solid #c8c8c8; border-right: 0; display: flex; align-items: center; justify-content: flex-end; padding-right: 3px; }

/* Sheet */
.sheet { flex: none; height: 648px; display: flex; background: #e6e6e6; }
.gridwrap { width: 1889px; height: 648px; overflow: hidden; flex: none; }
.grid { border-collapse: separate; border-spacing: 0; table-layout: fixed; width: 1889px; font-family: "Liberation Sans", sans-serif; font-size: 16px; color: #111; }
.c-rh { width: 34px; }
.c-a { width: 759px; }
.c-b { width: 32px; }
.c-c { width: 136px; }
.c-d { width: 59px; }
.c-e { width: 174px; }
.c-f { width: 42px; }
.c-g { width: 172px; }
.c-h { width: 284px; }
.c-i { width: 142px; }
.c-j { width: 55px; }
.grid td, .grid th { padding: 0; white-space: nowrap; vertical-align: bottom; line-height: 18px; }
.grid td { background: #fff; border-right: 1px solid #d4d4d4; border-bottom: 1px solid #d4d4d4; padding-bottom: 3px; overflow: visible; }
.grid td:last-child { border-right: 1px solid #8f8f8f; }
.grid tbody th { background: #e6e6e6; border-bottom: 1px solid #b4b4b4; border-right: 1px solid #a8a8a8; font-weight: 400; font-size: 16.5px; letter-spacing: -.8px; color: #333; line-height: 16px; padding: 0 0 2px 0; }
.grid tbody .cutoff th { padding-bottom: 7px; }
.rhead { height: 20px; }
.rhead th { background: #e6e6e6; border-bottom: 2px solid #a0a0a0; border-right: 1px solid #b0b0b0; font-weight: 400; font-size: 16px; color: #222; line-height: 17px; }
.rhead th:last-child { border-right: 0; }
.rhead .col-on { background: #d2d2d2; color: #217346; border-bottom-color: #217346; }
.corner { position: relative; }
.corner i { position: absolute; right: 3px; bottom: 2px; width: 11px; height: 11px; background: #b4b4b4; clip-path: polygon(100% 0, 100% 100%, 0 100%); }
.h20 { height: 20px; }
.h21 { height: 21px; }
.h25 { height: 25px; }
.h26 { height: 26px; }
.h30 { height: 30px; }
.h40 { height: 40px; }
.h42 { height: 42px; }
.grid .h21 td { padding-bottom: 1px; }

.grid .head { font-weight: 700; font-size: 21.4px; line-height: 24px; padding-left: 4px; color: #000; }
.grid .head-a { padding-bottom: 0; }
.grid .head-b { padding-bottom: 3px; }
.cal { font-family: Lato, "Open Sans", sans-serif; font-size: 17.6px; }
.cal.bold { font-size: 17.95px; }
.ari-cal { font-family: "Liberation Sans", sans-serif; font-size: 16.4px; }
.bold { font-weight: 700; }
.ari { font-size: 16px; letter-spacing: -.15px; }
.ari.bold { font-size: 16px; letter-spacing: 0; }
.grid .ind0 { padding-left: 19px; }
.grid .ind1 { padding-left: 23px; }
.grid .ind2 { padding-left: 51px; }
.grid .ind3 { padding-left: 43px; }
.grid .ind4 { padding-left: 63px; }
.grid .ind5 { padding-left: 87px; }
.grid .num { text-align: right; padding-right: 3px; }
.grid .num-8 { padding-right: 6px; }
.mid { text-align: center; }
.grid .pad { padding-left: 4px; }
.grid .fill { background: #dce6f1; }
.grid .b-thick { border-bottom: 2px solid #000; }
.grid .b-dbl { border-bottom: 3px double #000; }
.grid .clip { overflow: hidden; }
.grid .note { background: #d9d9d9; border-color: #d9d9d9; vertical-align: middle; padding: 0 0 17px 3px; line-height: 21px; font-size: 15.6px; letter-spacing: -.1px; color: #222; }
.grid .small-left { padding-left: 5px; }
.acct { display: flex; justify-content: space-between; padding: 0 27px 0 9px; }
.grid .top { vertical-align: top; padding-top: 1px; padding-bottom: 0; }
.grid .sub { font-size: 19.6px; padding-left: 5px; line-height: 22px; padding-top: 0; }

.vscroll { width: 20px; flex: none; padding-left: 3px; display: flex; flex-direction: column; background: #d9d9d9; height: 648px; }
.sb-btn { height: 25px; margin-top: 1px; background: #fff; border: 1px solid #bdbdbd; border-right: 0; display: flex; align-items: center; justify-content: center; flex: none; }
.sb-gap1 { height: 144px; flex: none; }
.sb-thumb { height: 246px; background: #fff; flex: none; border: 1px solid #d0d0d0; border-right: 0; }
.sb-gap2 { height: 206px; flex: none; }

/* Sheet tabs */
.sheettabs { flex: none; height: 34px; background: #e6e6e6; border-top: 2px solid #a8a8a8; border-bottom: 2px solid #c8c8c8; display: flex; align-items: center; position: relative; font-size: 19px; }
.n1 { margin-left: 29px; }
.n2 { margin-left: 27px; }
.st-sep { margin-left: 48px; width: 1px; height: 30px; background: #a8a8a8; }
.st { height: 31px; line-height: 28px; text-align: center; letter-spacing: -.1px; white-space: nowrap; }
.st-template { width: 118px; padding-right: 6px; color: #444; }
.st-on { width: 127px; margin-top: -2px; height: 32px; line-height: 30px; background: #fff; color: #217346; font-weight: 700; border: 1px solid #a8a8a8; border-top: 0; border-bottom: 3px solid #217346; }
.st-add { margin-left: 38px; }
.st-dots { margin-left: 721px; width: 8px; padding-top: 0; gap: 2px; }
.st-dots i { width: 3px; height: 3px; }
.hs-btn { width: 24px; height: 24px; background: #fff; border: 1px solid #b8b8b8; display: flex; align-items: center; justify-content: center; flex: none; }
.hs-left { margin-left: 15px; }
.hs-thumb { width: 572px; height: 24px; background: #fff; border: 1px solid #b8b8b8; border-left: 0; }
.hs-track { width: 102px; height: 24px; background: #d9d9d9; }

/* Status bar */
.status { flex: none; height: 22px; display: flex; align-items: flex-start; font-size: 14.5px; padding-left: 10px; overflow: hidden; position: relative; }
.st-msg { width: 1474px; padding-top: 8px; line-height: 20px; white-space: nowrap; letter-spacing: -.1px; font-size: 15px; }
.view { width: 60px; height: 22px; display: flex; justify-content: center; padding-top: 7px; flex: none; }
.view-on { background: #d2d2d2; }
.z-minus { margin-left: 12px; width: 20px; font-size: 18px; line-height: 18px; padding-top: 8px; }
.slider { width: 147px; height: 22px; position: relative; flex: none; margin-left: -1px; }
.slider::before { content: ""; position: absolute; left: 0; right: 0; top: 15px; height: 2px; background: #bbb; }
.thumb { position: absolute; left: 55px; top: 8px; width: 8px; height: 14px; background: #777; }
.tick { position: absolute; left: 73px; top: 11px; width: 1px; height: 9px; background: #999; }
.z-plus { margin-left: 6px; width: 16px; font-size: 20px; line-height: 20px; padding-top: 6px; }
.z-pct { margin-left: 10px; padding-top: 8px; font-size: 14.5px; line-height: 18px; white-space: nowrap; }
```
